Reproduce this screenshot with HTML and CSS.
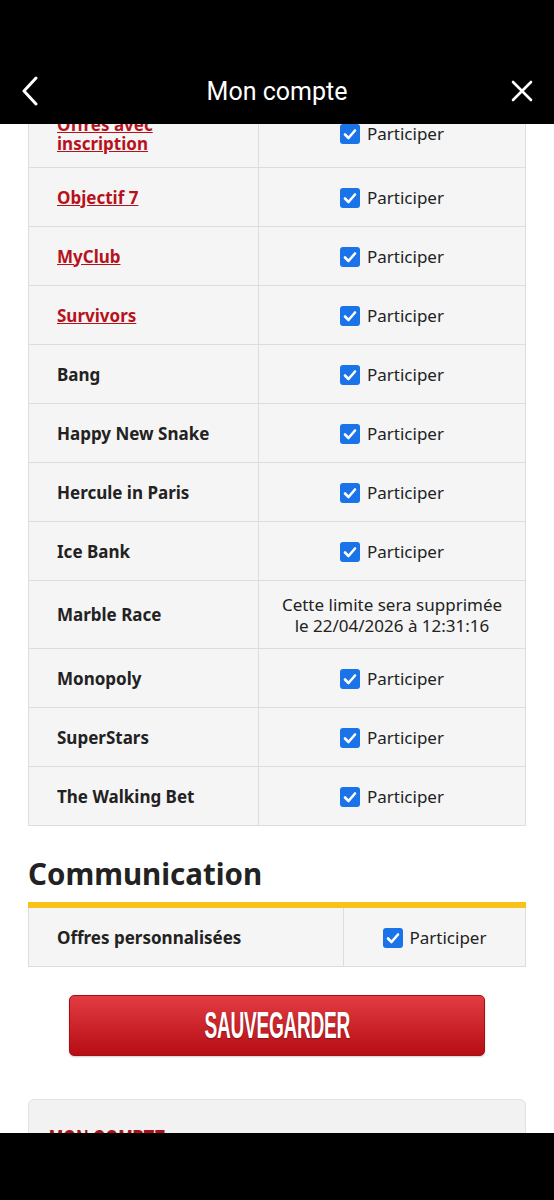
FILE: index.html
```html
<!DOCTYPE html>
<html lang="fr">
<head>
  <meta charset="UTF-8">
  <meta name="viewport" content="width=device-width, initial-scale=1.0">
  <title>Mon compte</title>
  <link rel="stylesheet" href="styles.css">
</head>
<body>
  <header class="topbar">
    <button class="icon-btn back" aria-label="Retour">
      <svg width="20" height="30" viewBox="0 0 20 30"><path d="M16 2 L4 15 L16 28" fill="none" stroke="#fff" stroke-width="3" stroke-linecap="round" stroke-linejoin="round"/></svg>
    </button>
    <div class="topbar-title">Mon compte</div>
    <button class="icon-btn close" aria-label="Fermer">
      <svg width="22" height="22" viewBox="0 0 22 22"><path d="M2 2 L20 20 M20 2 L2 20" fill="none" stroke="#fff" stroke-width="2.6" stroke-linecap="round"/></svg>
    </button>
  </header>

  <main class="page">
    <table class="games">
      <tbody>
        <tr class="tall">
          <td class="name"><a href="#">Offres avec inscription</a></td>
          <td class="opt"><span class="check"><svg viewBox="0 0 20 20"><path d="M5 10.5 L8.5 14 L15 6.5" fill="none" stroke="#fff" stroke-width="2.6" stroke-linecap="round" stroke-linejoin="round"/></svg></span>Participer</td>
        </tr>
        <tr>
          <td class="name"><a href="#">Objectif 7</a></td>
          <td class="opt"><span class="check"><svg viewBox="0 0 20 20"><path d="M5 10.5 L8.5 14 L15 6.5" fill="none" stroke="#fff" stroke-width="2.6" stroke-linecap="round" stroke-linejoin="round"/></svg></span>Participer</td>
        </tr>
        <tr>
          <td class="name"><a href="#">MyClub</a></td>
          <td class="opt"><span class="check"><svg viewBox="0 0 20 20"><path d="M5 10.5 L8.5 14 L15 6.5" fill="none" stroke="#fff" stroke-width="2.6" stroke-linecap="round" stroke-linejoin="round"/></svg></span>Participer</td>
        </tr>
        <tr>
          <td class="name"><a href="#">Survivors</a></td>
          <td class="opt"><span class="check"><svg viewBox="0 0 20 20"><path d="M5 10.5 L8.5 14 L15 6.5" fill="none" stroke="#fff" stroke-width="2.6" stroke-linecap="round" stroke-linejoin="round"/></svg></span>Participer</td>
        </tr>
        <tr>
          <td class="name">Bang</td>
          <td class="opt"><span class="check"><svg viewBox="0 0 20 20"><path d="M5 10.5 L8.5 14 L15 6.5" fill="none" stroke="#fff" stroke-width="2.6" stroke-linecap="round" stroke-linejoin="round"/></svg></span>Participer</td>
        </tr>
        <tr>
          <td class="name">Happy New Snake</td>
          <td class="opt"><span class="check"><svg viewBox="0 0 20 20"><path d="M5 10.5 L8.5 14 L15 6.5" fill="none" stroke="#fff" stroke-width="2.6" stroke-linecap="round" stroke-linejoin="round"/></svg></span>Participer</td>
        </tr>
        <tr>
          <td class="name">Hercule in Paris</td>
          <td class="opt"><span class="check"><svg viewBox="0 0 20 20"><path d="M5 10.5 L8.5 14 L15 6.5" fill="none" stroke="#fff" stroke-width="2.6" stroke-linecap="round" stroke-linejoin="round"/></svg></span>Participer</td>
        </tr>
        <tr>
          <td class="name">Ice Bank</td>
          <td class="opt"><span class="check"><svg viewBox="0 0 20 20"><path d="M5 10.5 L8.5 14 L15 6.5" fill="none" stroke="#fff" stroke-width="2.6" stroke-linecap="round" stroke-linejoin="round"/></svg></span>Participer</td>
        </tr>
        <tr class="tall">
          <td class="name">Marble Race</td>
          <td class="opt limit">Cette limite sera supprimée<br>le 22/04/2026 à 12:31:16</td>
        </tr>
        <tr>
          <td class="name">Monopoly</td>
          <td class="opt"><span class="check"><svg viewBox="0 0 20 20"><path d="M5 10.5 L8.5 14 L15 6.5" fill="none" stroke="#fff" stroke-width="2.6" stroke-linecap="round" stroke-linejoin="round"/></svg></span>Participer</td>
        </tr>
        <tr>
          <td class="name">SuperStars</td>
          <td class="opt"><span class="check"><svg viewBox="0 0 20 20"><path d="M5 10.5 L8.5 14 L15 6.5" fill="none" stroke="#fff" stroke-width="2.6" stroke-linecap="round" stroke-linejoin="round"/></svg></span>Participer</td>
        </tr>
        <tr>
          <td class="name">The Walking Bet</td>
          <td class="opt"><span class="check"><svg viewBox="0 0 20 20"><path d="M5 10.5 L8.5 14 L15 6.5" fill="none" stroke="#fff" stroke-width="2.6" stroke-linecap="round" stroke-linejoin="round"/></svg></span>Participer</td>
        </tr>
      </tbody>
    </table>

    <h2 class="section-title">Communication</h2>
    <table class="comms">
      <tbody>
        <tr>
          <td class="name">Offres personnalisées</td>
          <td class="opt"><span class="check"><svg viewBox="0 0 20 20"><path d="M5 10.5 L8.5 14 L15 6.5" fill="none" stroke="#fff" stroke-width="2.6" stroke-linecap="round" stroke-linejoin="round"/></svg></span>Participer</td>
        </tr>
      </tbody>
    </table>

    <div class="save-row">
      <button class="btn-save"><span class="btn-label">Sauvegarder</span></button>
    </div>

    <div class="account-card">
      <div class="card-title">Mon compte</div>
    </div>
  </main>

  <div class="navbar"></div>
</body>
</html>
```

FILE: styles.css
```css
body {
  margin: 0;
  padding: 0;
  background-color: #fff;
  font-family: "Noto Sans", "Open Sans", sans-serif;
  color: #222;
}

.topbar {
  position: fixed;
  top: 0;
  left: 0;
  right: 0;
  height: 124px;
  padding-top: 60px;
  padding-bottom: 2px;
  box-sizing: border-box;
  background-color: #000;
  display: flex;
  align-items: center;
  justify-content: space-between;
  z-index: 10;
}

.topbar-title {
  color: #fff;
  font-family: Roboto, sans-serif;
  font-size: 25px;
}

.icon-btn {
  background: none;
  border: none;
  padding: 0;
  width: 62px;
  height: 62px;
  display: flex;
  align-items: center;
  justify-content: center;
}

.icon-btn.back {
  justify-content: flex-start;
  padding-left: 20px;
  box-sizing: border-box;
}

.icon-btn.close {
  justify-content: flex-end;
  padding-right: 21px;
  box-sizing: border-box;
}

.page {
  padding: 99px 28px 120px;
}

table {
  width: 100%;
  border-collapse: collapse;
}

table td {
  background-color: #f5f5f5;
  border: 1px solid #ddd;
  height: 58px;
  padding: 0 28px;
  font-size: 17px;
}

table tr.tall td {
  height: 67px;
}

.games td.name {
  width: 173px;
}

.comms td.name {
  width: 258px;
}

td.name {
  font-weight: bold;
  line-height: 19px;
}

td.name a {
  color: #b7121c;
}

td.opt {
  text-align: center;
  padding: 0 10px;
}

td.limit {
  line-height: 21px;
}

.check {
  display: inline-block;
  width: 20px;
  height: 20px;
  background-color: #1a73e8;
  border-radius: 3px;
  vertical-align: -4px;
  margin-right: 7px;
}

.check svg {
  display: block;
  width: 20px;
  height: 20px;
}

.section-title {
  font-size: 29.5px;
  font-weight: bold;
  margin: 28px 0 0;
  padding-bottom: 8px;
  border-bottom: 6px solid #f9c21b;
  line-height: 40px;
}

.comms td {
  border-top: none;
}

.save-row {
  display: flex;
  justify-content: center;
  margin-top: 28px;
}

.btn-save {
  width: 416px;
  height: 61px;
  border: 1px solid #a30d13;
  border-radius: 5px;
  background: linear-gradient(#e23c42, #b70d14);
  color: #fff;
  font-family: "Liberation Sans", Arial, sans-serif;
  font-weight: bold;
  font-size: 36px;
  text-transform: uppercase;
  text-shadow: 0 1px 2px rgba(0, 0, 0, 0.35);
  box-shadow: 0 1px 2px rgba(0, 0, 0, 0.2);
  display: flex;
  align-items: center;
  justify-content: center;
}

.btn-label {
  display: inline-block;
  transform: scaleX(0.53);
  letter-spacing: -0.5px;
}

.account-card {
  margin-top: 43px;
  background-color: #f2f2f2;
  border: 1px solid #e2e2e2;
  border-radius: 6px;
  padding: 24px 20px;
  height: 120px;
}

.card-title {
  color: #a8101a;
  font-family: "Liberation Sans", Arial, sans-serif;
  font-weight: bold;
  font-size: 26px;
  text-transform: uppercase;
  transform: scaleX(0.65);
  transform-origin: left center;
}

.navbar {
  position: fixed;
  left: 0;
  right: 0;
  bottom: 0;
  height: 67px;
  background-color: #000;
  z-index: 10;
}
```
